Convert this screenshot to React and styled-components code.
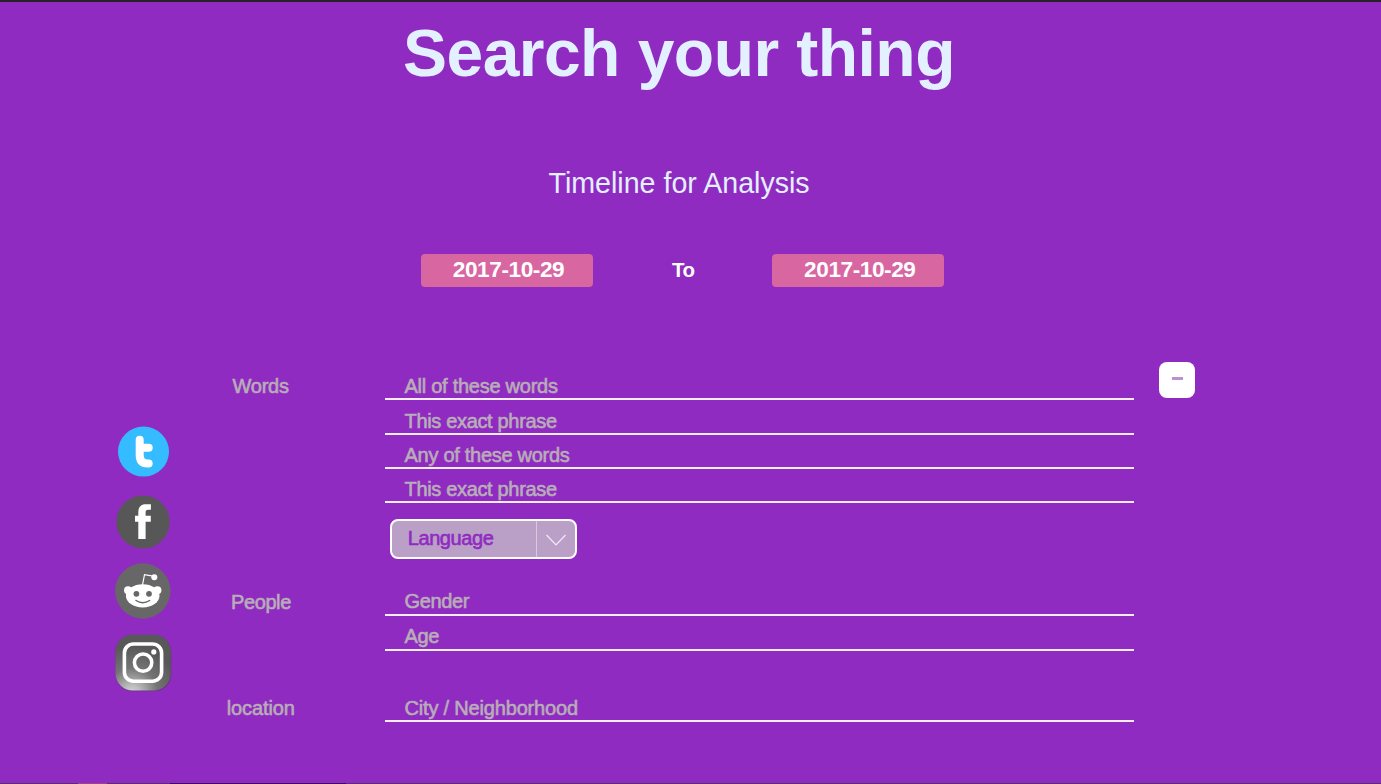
import React from "react";
import styled, { createGlobalStyle } from "styled-components";

const GlobalStyle = createGlobalStyle`
  *, *::before, *::after { box-sizing: border-box; }
  body { margin: 0; background: #902bc1; font-family: "Liberation Sans", Arial, sans-serif; }
`;

const Page = styled.main`
  display: flex;
  flex-direction: column;
  width: 1381px;
  height: 784px;
  overflow: hidden;
  background: #902bc1;
  border-top: 2px solid #262228;
`;

const Title = styled.h1`
  margin: 13px 0 0 403px;
  font-size: 66px;
  letter-spacing: -0.54px;
  line-height: 76px;
  height: 76px;
  color: #e2f0ff;
  white-space: nowrap;
`;

const Subtitle = styled.h2`
  margin: 76px 0 0 548.5px;
  height: 32px;
  font-size: 28.6px;
  font-weight: 400;
  line-height: 32px;
  color: #e2f0ff;
  white-space: nowrap;
`;

const DateRange = styled.div`
  display: flex;
  margin: 55px 0 0 421px;
  height: 33px;
`;

const DateButton = styled.button`
  width: 172px;
  height: 33px;
  padding: 0 0 2px 3px;
  border: 0;
  border-radius: 4px;
  background: #d866a1;
  color: #fff;
  font: bold 22.6px/31px "Liberation Sans", Arial, sans-serif;
  letter-spacing: -0.42px;
`;

const Between = styled.span`
  width: 179.3px;
  padding-left: 1px;
  text-align: center;
  color: #fff;
  font-size: 20.5px;
  letter-spacing: -0.6px;
  font-weight: 700;
  line-height: 32px;
`;

const SearchArea = styled.div`
  display: flex;
  align-items: flex-start;
  flex: 1;
  margin-top: 75px;
`;

const SocialList = styled.nav`
  display: flex;
  flex-direction: column;
  align-items: center;
  width: 58px;
  margin: 64px 0 0 114px;
`;

const SocialIcon = styled.svg`
  display: block;
  flex: none;
  overflow: visible;
  margin-bottom: ${(p) => p.$after}px;
`;

const Form = styled.form`
  width: 962px;
`;

const Section = styled.section`
  display: flex;
  padding-top: ${(p) => p.$top}px;
`;

const SectionLabel = styled.h3`
  width: 213px;
  margin: 0;
  padding-left: ${(p) => p.$indent}px;
  font-size: 20px;
  font-weight: 400;
  line-height: 24px;
  letter-spacing: ${(p) => p.$track}px;
  color: #b8adb8;
  -webkit-text-stroke: 0.6px #b8adb8;
`;

const Fields = styled.div`
  width: 749px;
`;

const Field = styled.div`
  height: ${(p) => p.$height}px;
  display: flex;
  flex-direction: column;
  justify-content: flex-end;
  padding: 0 0 ${(p) => p.$lift || 0}px 19.5px;
  border-bottom: 2px solid #f6ecfa;
  font-size: 20px;
  line-height: 24px;
  letter-spacing: ${(p) => p.$track}px;
  color: #b8adb8;
  -webkit-text-stroke: 0.6px #b8adb8;
`;

const Select = styled.div`
  display: flex;
  width: 187px;
  height: 40px;
  margin: 16px 0 0 5px;
  border: 2px solid #fff;
  border-radius: 8px;
  background: #baa0c7;
  overflow: hidden;
`;

const SelectText = styled.span`
  flex: 1;
  padding-left: 15.7px;
  font-size: 20px;
  line-height: 35px;
  letter-spacing: -0.4px;
  color: #902bc1;
  -webkit-text-stroke: 0.6px #902bc1;
`;

const SelectArrow = styled.span`
  display: flex;
  align-items: center;
  justify-content: center;
  width: 39px;
  padding-top: 1px;
  border-left: 1.5px solid #d9c8e1;
`;

const Collapse = styled.button`
  display: flex;
  justify-content: center;
  width: 36px;
  height: 36px;
  margin-left: 25px;
  padding: 15px 0 0;
  border: 0;
  border-radius: 8px;
  background: #fff;
`;

const Minus = styled.span`
  width: 11px;
  height: 3px;
  background: #bb92d0;
`;

const Taskbar = styled.footer`
  flex: none;
  height: 1px;
  background: linear-gradient(to right, #55306b 0 78px, #a0437b 78px 107px, #55306b 107px 170px, #3d0760 170px 346px, #55306b 346px);
`;

function Twitter() {
  return (
    <SocialIcon width="52" height="51" viewBox="0 0 52 51" $after={18}>
      <ellipse cx="26.5" cy="25.6" rx="25.5" ry="25" fill="#35bbff" />
      <path d="M22.7 13.7V29q0 8.5 8 8.6h1M23 21.7h8.7" fill="none" stroke="#fff" strokeWidth="8" strokeLinecap="round" />
    </SocialIcon>
  );
}

function Facebook() {
  return (
    <SocialIcon width="54" height="54" viewBox="0 0 54 54" $after={13.5}>
      <circle cx="27" cy="27" r="26.6" fill="#575757" />
      <path d="M22.3 44V26.7H19v-6h3.3v-3.2c0-5.5 2.5-8.2 8-8.2h4.6v5.5h-2.8c-2 0-2.5.9-2.5 2.6v3.3h5.2v6h-5.2V44z" fill="#fff" />
    </SocialIcon>
  );
}

function Reddit() {
  return (
    <SocialIcon width="56" height="56" viewBox="0 0 56 56" $after={15.5}>
      <circle cx="27.8" cy="28" r="27.7" fill="#676767" />
      <path d="M27.5 22l2-10.4 8.6 1.6" fill="none" stroke="#fff" strokeWidth="1.2" />
      <circle cx="39.3" cy="14.2" r="3" fill="#fff" />
      <circle cx="13" cy="27.2" r="4" fill="#fff" />
      <circle cx="42.4" cy="27.2" r="4" fill="#fff" />
      <ellipse cx="27.7" cy="32.8" rx="16.8" ry="11.6" fill="#fff" />
      <circle cx="21.4" cy="30.8" r="2.9" fill="#676767" />
      <circle cx="34" cy="30.8" r="2.9" fill="#676767" />
      <path d="M21 37.5q6.8 4.6 13.6 0" fill="none" stroke="#676767" strokeWidth="1.5" strokeLinecap="round" />
    </SocialIcon>
  );
}

function Instagram() {
  return (
    <SocialIcon width="57" height="57" viewBox="0 0 57 57" $after={0}>
      <defs>
        <radialGradient id="glow" cx=".3" cy="1.06" r=".85">
          <stop offset="0" stopColor="#d8d8d8" />
          <stop offset=".18" stopColor="#bcbcbc" />
          <stop offset=".55" stopColor="#747474" />
          <stop offset="1" stopColor="#585858" />
        </radialGradient>
      </defs>
      <rect x=".5" y="1" width="55.8" height="56.2" rx="17" fill="#66347d" />
      <rect x=".5" y=".7" width="55.3" height="55.8" rx="17" fill="url(#glow)" />
      <rect x="9.4" y="10" width="37.2" height="37.2" rx="9" fill="none" stroke="#fff" strokeWidth="3.6" />
      <circle cx="28.1" cy="28.6" r="8.7" fill="none" stroke="#fff" strokeWidth="3.5" />
      <circle cx="38.8" cy="17.9" r="2.6" fill="#fff" />
    </SocialIcon>
  );
}

export default function App() {
  return (
    <>
      <GlobalStyle />
      <Page>
        <Title>Search your thing</Title>
        <Subtitle>Timeline for Analysis</Subtitle>
        <DateRange>
          <DateButton>2017-10-29</DateButton>
          <Between>To</Between>
          <DateButton>2017-10-29</DateButton>
        </DateRange>
        <SearchArea>
          <SocialList>
            <Twitter />
            <Facebook />
            <Reddit />
            <Instagram />
          </SocialList>
          <Form>
            <Section $top={12}>
              <SectionLabel $indent={60.5} $track={-0.25}>Words</SectionLabel>
              <Fields>
                <Field $height={26} $track={-0.26}>All of these words</Field>
                <Field $height={35} $track={-0.33}>This exact phrase</Field>
                <Field $height={34} $track={-0.28}>Any of these words</Field>
                <Field $height={34} $track={-0.33}>This exact phrase</Field>
                <Select>
                  <SelectText>Language</SelectText>
                  <SelectArrow>
                    <svg width="22" height="14" viewBox="0 0 22 14">
                      <path d="M1.5 2L11 12l9.5-10" fill="none" stroke="#f3e9f7" strokeWidth="1.2" />
                    </svg>
                  </SelectArrow>
                </Select>
              </Fields>
            </Section>
            <Section $top={31}>
              <SectionLabel $indent={59} $track={-0.4}>People</SectionLabel>
              <Fields>
                <Field $height={26} $track={-0.36} $lift={1}>Gender</Field>
                <Field $height={35} $track={-0.3} $lift={1}>Age</Field>
              </Fields>
            </Section>
            <Section $top={45}>
              <SectionLabel $indent={54.7} $track={-0.1}>location</SectionLabel>
              <Fields>
                <Field $height={26} $track={-0.18}>City / Neighborhood</Field>
              </Fields>
            </Section>
          </Form>
          <Collapse type="button" aria-label="Collapse">
            <Minus />
          </Collapse>
        </SearchArea>
        <Taskbar />
      </Page>
    </>
  );
}
